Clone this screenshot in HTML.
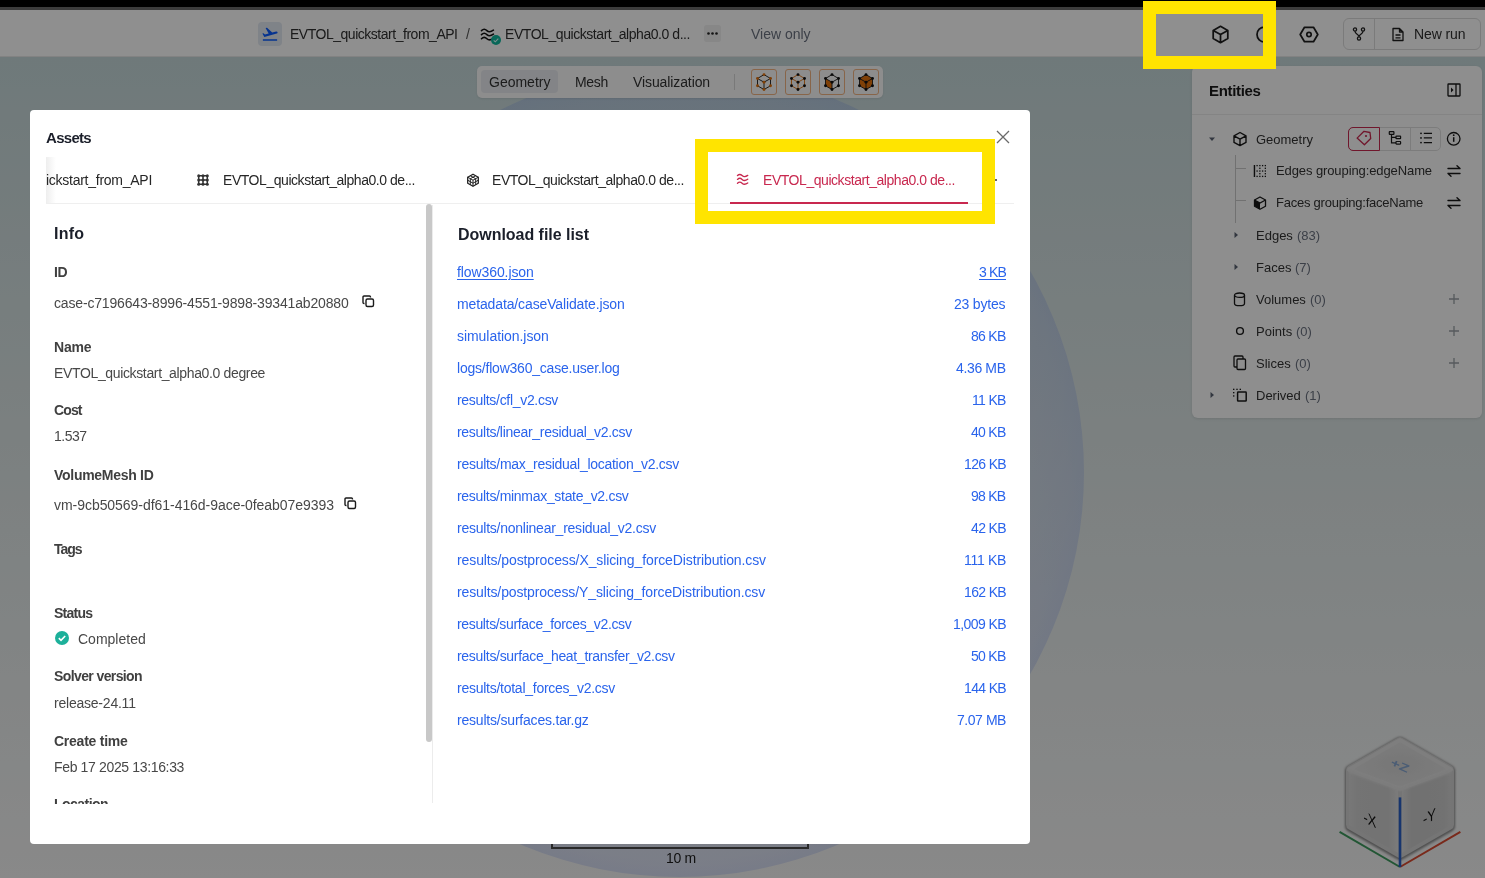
<!DOCTYPE html><html><head><meta charset="utf-8"><style>
html,body{margin:0;padding:0;}
body{width:1485px;height:878px;overflow:hidden;position:relative;background:#fff;font-family:"Liberation Sans",sans-serif;}
.a{position:absolute;box-sizing:border-box;}
.t{position:absolute;line-height:1;white-space:nowrap;-webkit-font-smoothing:antialiased;will-change:transform;}
</style></head><body>
<div class="a" style="left:0px;top:57px;width:1485px;height:821px;background:linear-gradient(180deg,#c6d8da 0%,#d9e3e3 40%,#f4f4f4 100%);"></div>
<div class="a" style="left:275.0px;top:67.5px;width:809px;height:809px;border-radius:50%;background:radial-gradient(circle closest-side,rgba(100,130,230,0.05) 0%,rgba(100,130,230,0.10) 80%,rgba(100,130,230,0.17) 96%,rgba(110,140,235,0.22) 100%);"></div>
<div class="a" style="left:0px;top:10px;width:1485px;height:47px;background:#fff;border-bottom:1px solid #e8e8e8;"></div>
<div class="a" style="left:258px;top:22px;width:24px;height:24px;background:#e3e9f3;border-radius:4px;"></div>
<svg class="a" style="left:261px;top:25px;" width="18" height="18" viewBox="0 0 24 24" fill="none"><path d="M2.5 19h19v2h-19v-2zm19.57-9.36c-.21-.8-1.04-1.28-1.84-1.06L14.92 10l-6.9-6.43-1.93.51 4.14 7.17-4.97 1.33-1.97-1.54-1.45.39 2.59 4.49L21 11.49c.81-.23 1.28-1.05 1.07-1.85z" fill="#0a5cff"/></svg>
<div class="t" style="left:290.0px;top:27.1px;font-size:14px;font-weight:400;color:#303030;letter-spacing:-0.479px;">EVTOL_quickstart_from_API</div>
<div class="t" style="left:466.0px;top:27.1px;font-size:14px;font-weight:400;color:#555;">/</div>
<svg class="a" style="left:480px;top:27px;" width="16" height="14" viewBox="0 0 16 14" fill="none"><path d="M1.5 3.6c1.8-1.8 3.6-1.8 5.4 0s3.6 1.8 6.5-.4M1.5 7.6c1.8-1.8 3.6-1.8 5.4 0s3.6 1.8 6.5-.4M1.5 11.7c1.8-1.8 3.6-1.8 5.4 0s3.6 1.8 6.5-.4" stroke="#111" stroke-width="1.6" stroke-linecap="round"/></svg>
<svg class="a" style="left:490px;top:34px;" width="12" height="12" viewBox="0 0 12 12" fill="none"><circle cx="6" cy="6" r="5" fill="#10b89e"/><path d="M3.7 6.3l1.6 1.5 3-3.2" stroke="#dff" stroke-width="1.1"/></svg>
<div class="t" style="left:505.0px;top:27.1px;font-size:14px;font-weight:400;color:#303030;letter-spacing:-0.439px;">EVTOL_quickstart_alpha0.0 d...</div>
<div class="a" style="left:704px;top:25px;width:17px;height:17px;background:#f0f0f0;border-radius:3px;"></div>
<svg class="a" style="left:704px;top:25px;" width="17" height="17" viewBox="0 0 17 17" fill="none"><circle cx="4.5" cy="8.5" r="1.3" fill="#222"/><circle cx="8.5" cy="8.5" r="1.3" fill="#222"/><circle cx="12.5" cy="8.5" r="1.3" fill="#222"/></svg>
<div class="t" style="left:751.0px;top:27.1px;font-size:14px;font-weight:400;color:#6b7280;letter-spacing:-0.018px;">View only</div>
<svg class="a" style="left:1211px;top:25px;" width="19" height="19" viewBox="0 0 19 19" fill="none"><path d="M9.5 1.3l7.3 4.1v8.2l-7.3 4.1-7.3-4.1V5.4z M2.2 5.4l7.3 4.1 7.3-4.1 M9.5 9.5v8.2" stroke="#1f1f1f" stroke-width="1.75" stroke-linejoin="round"/></svg>
<svg class="a" style="left:1255px;top:25px;" width="19" height="19" viewBox="0 0 19 19" fill="none"><circle cx="9.5" cy="9.5" r="7.5" stroke="#1f1f1f" stroke-width="1.75"/></svg>
<svg class="a" style="left:1299px;top:25px;" width="20" height="19" viewBox="0 0 20 19" fill="none"><path d="M5.5 2.3h9l4.3 7.2-4.3 7.2h-9L1.2 9.5z" stroke="#1f1f1f" stroke-width="1.75" stroke-linejoin="round"/><circle cx="10" cy="9.5" r="2.2" stroke="#1f1f1f" stroke-width="1.7"/></svg>
<div class="a" style="left:1343px;top:18px;width:138px;height:32px;border:1px solid #dcdcdc;border-radius:6px;"></div>
<div class="a" style="left:1374px;top:18px;width:1px;height:32px;background:#dcdcdc;"></div>
<svg class="a" style="left:1352px;top:27px;" width="14" height="14" viewBox="0 0 14 14" fill="none"><circle cx="3" cy="2.5" r="1.6" stroke="#1f1f1f" stroke-width="1.3"/><circle cx="11" cy="2.5" r="1.6" stroke="#1f1f1f" stroke-width="1.3"/><circle cx="7" cy="11.5" r="1.6" stroke="#1f1f1f" stroke-width="1.3"/><path d="M3 4.2c0 3 4 3 4 5.5M11 4.2c0 3-4 3-4 5.5" stroke="#1f1f1f" stroke-width="1.3"/></svg>
<svg class="a" style="left:1391px;top:27px;" width="14" height="15" viewBox="0 0 14 15" fill="none"><path d="M2 1.5h6.5l3.5 3.5v8.5H2z M8.5 1.5V5H12 M4.5 8h5M4.5 10.8h5" stroke="#1f1f1f" stroke-width="1.3" stroke-linejoin="round"/></svg>
<div class="t" style="left:1414.0px;top:27.1px;font-size:14px;font-weight:400;color:#303030;letter-spacing:-0.104px;">New run</div>
<div class="a" style="left:477px;top:66px;width:406px;height:32px;background:#fbfbfb;border-radius:5px;box-shadow:0 1px 2px rgba(0,0,0,0.08);"></div>
<div class="a" style="left:481px;top:70px;width:77px;height:23px;background:#e9ecf1;border-radius:4px;"></div>
<div class="t" style="left:489.0px;top:75.1px;font-size:14px;font-weight:400;color:#333;letter-spacing:-0.007px;">Geometry</div>
<div class="t" style="left:575.0px;top:75.1px;font-size:14px;font-weight:400;color:#333;letter-spacing:-0.308px;">Mesh</div>
<div class="t" style="left:632.6px;top:75.1px;font-size:14px;font-weight:400;color:#333;letter-spacing:-0.103px;">Visualization</div>
<div class="a" style="left:734px;top:74px;width:1px;height:16px;background:#d8d8d8;"></div>
<div class="a" style="left:751px;top:69px;width:26px;height:26px;border:1px solid #f2b483;border-radius:3px;"></div>
<svg class="a" style="left:751px;top:69px;" width="26" height="26" viewBox="0 0 26 26" fill="none"><path d="M13,5.6 L19.5,9.5 L19.5,16.8 L13,20.5 L6.5,16.8 L6.5,9.5z M6.5,9.5 L13,13.2 L19.5,9.5 M13,13.2 L13,20.5" stroke="#1a1a1a" stroke-width="0.9" stroke-linejoin="round"/><circle cx="13" cy="5.6" r="1.45" fill="#e2720e"/><circle cx="6.5" cy="9.5" r="1.45" fill="#e2720e"/><circle cx="19.5" cy="9.5" r="1.45" fill="#e2720e"/><circle cx="13" cy="13.2" r="1.45" fill="#e2720e"/><circle cx="6.5" cy="16.8" r="1.45" fill="#e2720e"/><circle cx="19.5" cy="16.8" r="1.45" fill="#e2720e"/><circle cx="13" cy="20.5" r="1.45" fill="#e2720e"/></svg>
<div class="a" style="left:785px;top:69px;width:26px;height:26px;border:1px solid #f2b483;border-radius:3px;"></div>
<svg class="a" style="left:785px;top:69px;" width="26" height="26" viewBox="0 0 26 26" fill="none"><path d="M13,5.6 L19.5,9.5 L19.5,16.8 L13,20.5 L6.5,16.8 L6.5,9.5z M6.5,9.5 L13,13.2 L19.5,9.5 M13,13.2 L13,20.5" stroke="#e2720e" stroke-width="0.9" stroke-linejoin="round"/><circle cx="13" cy="5.6" r="1.45" fill="#111"/><circle cx="6.5" cy="9.5" r="1.45" fill="#111"/><circle cx="19.5" cy="9.5" r="1.45" fill="#111"/><circle cx="13" cy="13.2" r="1.45" fill="#111"/><circle cx="6.5" cy="16.8" r="1.45" fill="#111"/><circle cx="19.5" cy="16.8" r="1.45" fill="#111"/><circle cx="13" cy="20.5" r="1.45" fill="#111"/></svg>
<div class="a" style="left:819px;top:69px;width:26px;height:26px;border:1px solid #f2b483;border-radius:3px;"></div>
<svg class="a" style="left:819px;top:69px;" width="26" height="26" viewBox="0 0 26 26" fill="none"><path d="M6.5,9.5 L13,13.2 L13,20.5 L6.5,16.8z" fill="#e2720e"/><path d="M13,5.6 L19.5,9.5 L19.5,16.8 L13,20.5 L6.5,16.8 L6.5,9.5z M6.5,9.5 L13,13.2 L19.5,9.5 M13,13.2 L13,20.5" stroke="#1a1a1a" stroke-width="0.9" stroke-linejoin="round"/><circle cx="13" cy="5.6" r="1.45" fill="#111"/><circle cx="6.5" cy="9.5" r="1.45" fill="#111"/><circle cx="19.5" cy="9.5" r="1.45" fill="#111"/><circle cx="13" cy="13.2" r="1.45" fill="#111"/><circle cx="6.5" cy="16.8" r="1.45" fill="#111"/><circle cx="19.5" cy="16.8" r="1.45" fill="#111"/><circle cx="13" cy="20.5" r="1.45" fill="#111"/></svg>
<div class="a" style="left:853px;top:69px;width:26px;height:26px;border:1px solid #f2b483;border-radius:3px;"></div>
<svg class="a" style="left:853px;top:69px;" width="26" height="26" viewBox="0 0 26 26" fill="none"><path d="M13,5.6 L19.5,9.5 L19.5,16.8 L13,20.5 L6.5,16.8 L6.5,9.5z" fill="#e2720e"/><path d="M13,5.6 L19.5,9.5 L19.5,16.8 L13,20.5 L6.5,16.8 L6.5,9.5z M6.5,9.5 L13,13.2 L19.5,9.5 M13,13.2 L13,20.5" stroke="#1a1a1a" stroke-width="0.9" stroke-linejoin="round"/><circle cx="13" cy="5.6" r="1.45" fill="#111"/><circle cx="6.5" cy="9.5" r="1.45" fill="#111"/><circle cx="19.5" cy="9.5" r="1.45" fill="#111"/><circle cx="13" cy="13.2" r="1.45" fill="#111"/><circle cx="6.5" cy="16.8" r="1.45" fill="#111"/><circle cx="19.5" cy="16.8" r="1.45" fill="#111"/><circle cx="13" cy="20.5" r="1.45" fill="#111"/></svg>
<div class="a" style="left:1192px;top:66px;width:290px;height:352px;background:#fdfdfd;border-radius:6px;box-shadow:0 1px 3px rgba(0,0,0,0.10);"></div>
<div class="t" style="left:1209.0px;top:83.1px;font-size:15px;font-weight:700;color:#1a1a1a;letter-spacing:-0.322px;">Entities</div>
<svg class="a" style="left:1447px;top:83px;" width="14" height="14" viewBox="0 0 14 14" fill="none"><rect x="1" y="1" width="12" height="12" rx="0.5" stroke="#1a1a1a" stroke-width="1.3"/><path d="M9 1v12" stroke="#1a1a1a" stroke-width="1.3"/><path d="M4 4.5l2.5 2.5L4 9.5z" fill="#1a1a1a"/></svg>
<div class="a" style="left:1192px;top:114px;width:290px;height:1px;background:#ebebeb;"></div>
<svg class="a" style="left:1208px;top:136px;" width="8" height="6" viewBox="0 0 8 6" fill="none"><path d="M1 1.5h6L4 5z" fill="#5a6272"/></svg>
<svg class="a" style="left:1232px;top:131px;" width="16" height="16" viewBox="0 0 16 16" fill="none"><path d="M8 1.5l6 3.3v6.6L8 14.6 2 11.4V4.8z M2 4.8l6 3.4 6-3.4 M8 8.2v6.4" stroke="#1a1a1a" stroke-width="1.4" stroke-linejoin="round"/></svg>
<div class="t" style="left:1256.0px;top:133.4px;font-size:13px;font-weight:400;color:#333;letter-spacing:-0.008px;">Geometry</div>
<div class="a" style="left:1348px;top:127px;width:93px;height:24px;border:1px solid #dedede;border-radius:5px;"></div>
<div class="a" style="left:1379px;top:127px;width:1px;height:24px;background:#dedede;"></div>
<div class="a" style="left:1410px;top:127px;width:1px;height:24px;background:#dedede;"></div>
<div class="a" style="left:1348px;top:127px;width:32px;height:24px;border:1px solid #c8284f;border-radius:5px 0 0 5px;"></div>
<svg class="a" style="left:1345px;top:124px;" width="120" height="30" viewBox="0 0 120 30" fill="none"><path d="M12.1 14.1L19 7.3l6 1.2.7 6-6.3 6.3z" stroke="#c8284f" stroke-width="1.3" stroke-linejoin="round"/><circle cx="21" cy="12" r="1.1" fill="#c8284f"/><rect x="44.3" y="7.6" width="4.6" height="2.8" rx="0.5" stroke="#1a1a1a" stroke-width="1.2"/><rect x="51" y="12.1" width="4.6" height="2.6" rx="0.5" stroke="#1a1a1a" stroke-width="1.2"/><rect x="51" y="17.5" width="4.6" height="2.6" rx="0.5" stroke="#1a1a1a" stroke-width="1.2"/><path d="M46.5 10.4v8.4H51M46.5 13.4H51" stroke="#1a1a1a" stroke-width="1.2"/><circle cx="76" cy="9.3" r="0.9" fill="#1a1a1a"/><circle cx="76" cy="13.9" r="0.9" fill="#1a1a1a"/><circle cx="76" cy="18.6" r="0.9" fill="#1a1a1a"/><path d="M78.8 9.3h8.2M78.8 13.9h8.2M78.8 18.6h8.2" stroke="#1a1a1a" stroke-width="1.2"/><circle cx="108.7" cy="14.8" r="6.3" stroke="#1a1a1a" stroke-width="1.3"/><path d="M108.7 13.2v4.6" stroke="#1a1a1a" stroke-width="1.5"/><circle cx="108.7" cy="11.2" r="0.9" fill="#1a1a1a"/></svg>
<div class="a" style="left:1235px;top:155px;width:1px;height:68px;background:#c9c9c9;"></div>
<div class="a" style="left:1236px;top:168px;width:10px;height:1px;background:#c9c9c9;"></div>
<div class="a" style="left:1236px;top:200px;width:10px;height:1px;background:#c9c9c9;"></div>
<svg class="a" style="left:1253px;top:164px;" width="14" height="14" viewBox="0 0 14 14" fill="none"><rect x="0.75" y="1" width="1.4" height="12" fill="#1a1a1a"/><rect x="3.45" y="0.95" width="1.3" height="1.3" fill="#1a1a1a"/><rect x="6.20" y="0.95" width="1.3" height="1.3" fill="#1a1a1a"/><rect x="8.95" y="0.95" width="1.3" height="1.3" fill="#1a1a1a"/><rect x="11.70" y="0.95" width="1.3" height="1.3" fill="#1a1a1a"/><rect x="6.20" y="3.65" width="1.3" height="1.3" fill="#1a1a1a"/><rect x="11.70" y="3.65" width="1.3" height="1.3" fill="#1a1a1a"/><rect x="3.45" y="6.40" width="1.3" height="1.3" fill="#1a1a1a"/><rect x="6.20" y="6.40" width="1.3" height="1.3" fill="#1a1a1a"/><rect x="8.95" y="6.40" width="1.3" height="1.3" fill="#1a1a1a"/><rect x="11.70" y="6.40" width="1.3" height="1.3" fill="#1a1a1a"/><rect x="6.20" y="9.05" width="1.3" height="1.3" fill="#1a1a1a"/><rect x="11.70" y="9.05" width="1.3" height="1.3" fill="#1a1a1a"/><rect x="3.45" y="11.75" width="1.3" height="1.3" fill="#1a1a1a"/><rect x="6.20" y="11.75" width="1.3" height="1.3" fill="#1a1a1a"/><rect x="8.95" y="11.75" width="1.3" height="1.3" fill="#1a1a1a"/><rect x="11.70" y="11.75" width="1.3" height="1.3" fill="#1a1a1a"/></svg>
<div class="t" style="left:1276.4px;top:164.2px;font-size:13px;font-weight:400;color:#333;letter-spacing:-0.099px;">Edges grouping:edgeName</div>
<svg class="a" style="left:1447px;top:164px;" width="14" height="14" viewBox="0 0 14 14" fill="none"><path d="M1 4.5h12M10 1.8l3 2.7M1 9.5h12M4 12.2L1 9.5" stroke="#1a1a1a" stroke-width="1.4" stroke-linecap="round"/></svg>
<svg class="a" style="left:1253px;top:196px;" width="14" height="14" viewBox="0 0 14 14" fill="none"><path d="M7 1l5.5 3v6.2L7 13.2 1.5 10.2V4z" stroke="#1a1a1a" stroke-width="1.3" stroke-linejoin="round"/><path d="M1.5 4L7 7v6.2L1.5 10.2z" fill="#1a1a1a"/><path d="M1.5 4L7 7l5.5-3" stroke="#1a1a1a" stroke-width="1.3"/></svg>
<div class="t" style="left:1276.4px;top:196.4px;font-size:13px;font-weight:400;color:#333;letter-spacing:-0.237px;">Faces grouping:faceName</div>
<svg class="a" style="left:1447px;top:196px;" width="14" height="14" viewBox="0 0 14 14" fill="none"><path d="M1 4.5h12M10 1.8l3 2.7M1 9.5h12M4 12.2L1 9.5" stroke="#1a1a1a" stroke-width="1.4" stroke-linecap="round"/></svg>
<svg class="a" style="left:1233px;top:231px;" width="6" height="8" viewBox="0 0 6 8" fill="none"><path d="M1.5 1v6L5 4z" fill="#5a6272"/></svg>
<div class="t" style="left:1256.4px;top:229.3px;font-size:13px;font-weight:400;color:#333;">Edges </div>
<div class="t" style="left:1296.9px;top:229.3px;font-size:13px;font-weight:400;color:#6b7280;">(83)</div>
<svg class="a" style="left:1233px;top:263px;" width="6" height="8" viewBox="0 0 6 8" fill="none"><path d="M1.5 1v6L5 4z" fill="#5a6272"/></svg>
<div class="t" style="left:1256.4px;top:260.6px;font-size:13px;font-weight:400;color:#333;">Faces </div>
<div class="t" style="left:1295.4px;top:260.6px;font-size:13px;font-weight:400;color:#6b7280;">(7)</div>
<svg class="a" style="left:1233px;top:292px;" width="13" height="15" viewBox="0 0 13 15" fill="none"><ellipse cx="6.5" cy="3.2" rx="5" ry="2.2" stroke="#1a1a1a" stroke-width="1.3"/><path d="M1.5 3.2v8.3c0 1.3 2.2 2.2 5 2.2s5-.9 5-2.2V3.2" stroke="#1a1a1a" stroke-width="1.3"/></svg>
<div class="t" style="left:1256.4px;top:292.8px;font-size:13px;font-weight:400;color:#333;">Volumes </div>
<div class="t" style="left:1309.9px;top:292.8px;font-size:13px;font-weight:400;color:#6b7280;">(0)</div>
<svg class="a" style="left:1235px;top:326px;" width="10" height="10" viewBox="0 0 10 10" fill="none"><circle cx="5" cy="5" r="3.4" stroke="#1a1a1a" stroke-width="1.4"/></svg>
<div class="t" style="left:1256.4px;top:324.8px;font-size:13px;font-weight:400;color:#333;">Points </div>
<div class="t" style="left:1296.1px;top:324.8px;font-size:13px;font-weight:400;color:#6b7280;">(0)</div>
<svg class="a" style="left:1233px;top:355px;" width="14" height="16" viewBox="0 0 14 16" fill="none"><rect x="1" y="1" width="9" height="11" rx="1" stroke="#1a1a1a" stroke-width="1.3"/><rect x="4" y="4" width="8.5" height="10.5" rx="1" fill="#fdfdfd" stroke="#1a1a1a" stroke-width="1.3"/></svg>
<div class="t" style="left:1256.4px;top:356.5px;font-size:13px;font-weight:400;color:#333;">Slices </div>
<div class="t" style="left:1294.7px;top:356.5px;font-size:13px;font-weight:400;color:#6b7280;">(0)</div>
<svg class="a" style="left:1209px;top:391px;" width="6" height="8" viewBox="0 0 6 8" fill="none"><path d="M1.5 1v6L5 4z" fill="#5a6272"/></svg>
<svg class="a" style="left:1232px;top:387px;" width="16" height="16" viewBox="0 0 16 16" fill="none"><g fill="#1a1a1a"><rect x="1" y="1.7" width="1.4" height="1.3"/><rect x="4.3" y="1.7" width="1.4" height="1.3"/><rect x="7.6" y="1.7" width="1.4" height="1.3"/><rect x="1" y="5" width="1.4" height="1.3"/><rect x="1" y="8.3" width="1.4" height="1.3"/></g><rect x="5.6" y="5.1" width="8.6" height="8.9" rx="0.6" stroke="#1a1a1a" stroke-width="1.5"/></svg>
<div class="t" style="left:1256.4px;top:388.5px;font-size:13px;font-weight:400;color:#333;">Derived </div>
<div class="t" style="left:1304.8px;top:388.5px;font-size:13px;font-weight:400;color:#6b7280;">(1)</div>
<svg class="a" style="left:1448px;top:293px;" width="12" height="12" viewBox="0 0 12 12" fill="none"><path d="M6 1v10M1 6h10" stroke="#9aa0a6" stroke-width="1.3"/></svg>
<svg class="a" style="left:1448px;top:325px;" width="12" height="12" viewBox="0 0 12 12" fill="none"><path d="M6 1v10M1 6h10" stroke="#9aa0a6" stroke-width="1.3"/></svg>
<svg class="a" style="left:1448px;top:357px;" width="12" height="12" viewBox="0 0 12 12" fill="none"><path d="M6 1v10M1 6h10" stroke="#9aa0a6" stroke-width="1.3"/></svg>
<svg class="a" style="left:1330px;top:730px;will-change:transform;" width="140" height="145" viewBox="0 0 140 145" fill="none">
<defs>
<linearGradient id="lf" x1="0" y1="0" x2="1" y2="0"><stop offset="0" stop-color="#d6d6d6"/><stop offset="0.15" stop-color="#cfcfcf"/><stop offset="0.8" stop-color="#cdcdcd"/><stop offset="1" stop-color="#dcdcdc"/></linearGradient>
<linearGradient id="rf" x1="0" y1="0" x2="1" y2="0"><stop offset="0" stop-color="#dadada"/><stop offset="0.2" stop-color="#c9c9c9"/><stop offset="0.85" stop-color="#cbcbcb"/><stop offset="1" stop-color="#d2d2d2"/></linearGradient>
<radialGradient id="tf" cx="0.5" cy="0.5" r="0.6"><stop offset="0" stop-color="#d4d4d4"/><stop offset="0.7" stop-color="#dcdcdc"/><stop offset="1" stop-color="#e6e6e6"/></radialGradient>
<filter id="bl" x="-20%" y="-20%" width="140%" height="140%"><feGaussianBlur stdDeviation="1.2"/></filter>
</defs>
<path d="M70 12 L119 40 L119 95 L70 123 L21 95 L21 40 Z" fill="#8a8a8a" stroke="#8a8a8a" stroke-width="12" stroke-linejoin="round" filter="url(#bl)" transform="translate(0 1)"/>
<path d="M70 12 L119 40 L119 95 L70 123 L21 95 L21 40 Z" fill="#d0d0d0" stroke="#d0d0d0" stroke-width="10" stroke-linejoin="round"/>
<path d="M70 10 L121 39.6 L70 58.6 L19 39.6 Z" fill="url(#tf)" stroke="#e0e0e0" stroke-width="4" stroke-linejoin="round"/>
<path d="M19 42 L68 60 L68 123 L19 95 Z" fill="url(#lf)"/>
<path d="M121 42 L72 60 L72 123 L121 95 Z" fill="url(#rf)"/>
<path d="M19 41 L70 59.5 L121 41" stroke="#dedede" stroke-width="3" stroke-linejoin="round" filter="url(#bl)"/>
<path d="M70 60 L70 124" stroke="#dadada" stroke-width="5" filter="url(#bl)"/>
<g transform="translate(70 36) rotate(24) scale(1 0.7)"><text x="0" y="5" font-family="Liberation Sans" font-size="16" font-weight="700" fill="#86a6d0" text-anchor="middle">+Z</text></g>
<g transform="translate(40 89) skewY(26) scale(0.8 1)"><text x="0" y="6" font-family="Liberation Sans" font-size="16" fill="#111" text-anchor="middle">-X</text></g>
<g transform="translate(99.5 86) skewY(-26) scale(0.8 1)"><text x="0" y="6" font-family="Liberation Sans" font-size="16" fill="#111" text-anchor="middle">-Y</text></g>
<path d="M70 137 L9.6 101.9" stroke="#3e9a5e" stroke-width="2"/>
<path d="M70 137 L130.4 101.9" stroke="#d84a30" stroke-width="2"/>
<path d="M70 137 L70 67.4" stroke="#2a5fc4" stroke-width="2.6"/>
</svg>
<div class="a" style="left:551px;top:830px;width:258px;height:19px;border:2px solid #4a4a4a;border-top:none;"></div>
<div class="t" style="left:665.5px;top:851.0px;font-size:14px;font-weight:400;color:#1c1c1c;letter-spacing:-0.280px;">10 m</div>
<div class="a" style="left:0px;top:0px;width:1485px;height:878px;background:rgba(0,0,0,0.44);"></div>
<div class="a" style="left:0px;top:0px;width:1485px;height:7px;background:#000;"></div>
<div class="a" style="left:0px;top:7px;width:1485px;height:3px;background:#3c3c3c;"></div>
<div class="a" style="left:30px;top:110px;width:1000px;height:734px;background:#fff;border-radius:4px;"></div>
<div class="t" style="left:46.0px;top:130.3px;font-size:15px;font-weight:700;color:#1b1f2a;letter-spacing:-0.699px;">Assets</div>
<svg class="a" style="left:996px;top:130px;" width="14" height="14" viewBox="0 0 14 14" fill="none"><path d="M1 1l12 12M13 1L1 13" stroke="#6a6a6a" stroke-width="1.3"/></svg>
<div class="a" style="left:46px;top:203px;width:968px;height:1px;background:#efefef;"></div>
<div class="a" style="left:46px;top:157px;width:10px;height:46px;background:linear-gradient(90deg,#eeeeee,rgba(255,255,255,0));"></div>
<div class="t" style="left:46.0px;top:173.3px;font-size:14px;font-weight:400;color:#262626;letter-spacing:-0.263px;">ickstart_from_API</div>
<svg class="a" style="left:196px;top:173px;" width="14" height="14" viewBox="0 0 14 14" fill="none"><path d="M2.7 2.7h8.6M2.7 7h8.6M2.7 11.3h8.6M2.7 2.7v8.6M7 2.7v8.6M11.3 2.7v8.6" stroke="#333" stroke-width="1.5"/><circle cx="2.7" cy="2.7" r="1.5" fill="#333"/><circle cx="2.7" cy="7" r="1.5" fill="#333"/><circle cx="2.7" cy="11.3" r="1.5" fill="#333"/><circle cx="7" cy="2.7" r="1.5" fill="#333"/><circle cx="7" cy="7" r="1.5" fill="#333"/><circle cx="7" cy="11.3" r="1.5" fill="#333"/><circle cx="11.3" cy="2.7" r="1.5" fill="#333"/><circle cx="11.3" cy="7" r="1.5" fill="#333"/><circle cx="11.3" cy="11.3" r="1.5" fill="#333"/></svg>
<div class="t" style="left:222.6px;top:173.3px;font-size:14px;font-weight:400;color:#262626;letter-spacing:-0.451px;">EVTOL_quickstart_alpha0.0 de...</div>
<svg class="a" style="left:466px;top:173px;" width="14" height="14" viewBox="0 0 14 14" fill="none"><path d="M7 1.2l5.3 3v6.1L7 13.3 1.7 10.3V4.2z" stroke="#222" stroke-width="1.3" stroke-linejoin="round"/><path d="M1.7 4.2L7 7.2l5.3-3M7 7.2v6M4.3 2.7L9.7 5.7M9.7 2.7L4.3 5.7M1.7 7.2L7 10.2l5.3-3M4.3 5.7v6.1M9.7 5.7v6.1" stroke="#222" stroke-width="1"/></svg>
<div class="t" style="left:492.2px;top:173.3px;font-size:14px;font-weight:400;color:#262626;letter-spacing:-0.451px;">EVTOL_quickstart_alpha0.0 de...</div>
<svg class="a" style="left:736px;top:172px;" width="14" height="14" viewBox="0 0 14 14" fill="none"><path d="M1.5 3.6c1.6-1.5 3-1.5 4.6 0s3.2 1.6 5.6-.2M1.5 7.4c1.6-1.5 3-1.5 4.6 0s3.2 1.6 5.6-.2M1.5 11.2c1.6-1.5 3-1.5 4.6 0s3.2 1.6 5.6-.2" stroke="#c8284f" stroke-width="1.35" stroke-linecap="round"/></svg>
<div class="t" style="left:762.5px;top:173.3px;font-size:14px;font-weight:400;color:#c8284f;letter-spacing:-0.451px;">EVTOL_quickstart_alpha0.0 de...</div>
<div class="a" style="left:730px;top:201.5px;width:238px;height:2.5px;background:#c8284f;"></div>
<div class="a" style="left:995px;top:179px;width:2px;height:2px;background:#333;border-radius:1px;"></div>
<div class="a" style="left:432px;top:205px;width:1px;height:598px;background:#ececec;"></div>
<div class="a" style="left:426px;top:204px;width:6px;height:538px;background:#c8c8c8;border-radius:3px;"></div>
<div class="t" style="left:54.0px;top:226.4px;font-size:16px;font-weight:700;color:#1b1f2a;letter-spacing:0.271px;">Info</div>
<div class="t" style="left:54.0px;top:265.1px;font-size:14px;font-weight:700;color:#404040;letter-spacing:-0.500px;">ID</div>
<div class="t" style="left:54.0px;top:296.4px;font-size:14px;font-weight:400;color:#484848;letter-spacing:-0.164px;">case-c7196643-8996-4551-9898-39341ab20880</div>
<svg class="a" style="left:362px;top:295px;" width="13" height="13" viewBox="0 0 13 13" fill="none"><rect x="4" y="4" width="7.5" height="7.5" rx="1.5" stroke="#1a1a1a" stroke-width="1.4"/><path d="M2.5 8.5H2A1 1 0 0 1 1 7.5V2a1 1 0 0 1 1-1h5.5a1 1 0 0 1 1 1v.5" stroke="#1a1a1a" stroke-width="1.4"/></svg>
<div class="t" style="left:54.0px;top:339.5px;font-size:14px;font-weight:700;color:#404040;letter-spacing:-0.208px;">Name</div>
<div class="t" style="left:54.0px;top:365.6px;font-size:14px;font-weight:400;color:#484848;letter-spacing:-0.354px;">EVTOL_quickstart_alpha0.0 degree</div>
<div class="t" style="left:54.0px;top:403.1px;font-size:14px;font-weight:700;color:#404040;letter-spacing:-0.877px;">Cost</div>
<div class="t" style="left:54.0px;top:429.4px;font-size:14px;font-weight:400;color:#484848;letter-spacing:-0.506px;">1.537</div>
<div class="t" style="left:54.0px;top:467.6px;font-size:14px;font-weight:700;color:#404040;letter-spacing:-0.284px;">VolumeMesh ID</div>
<div class="t" style="left:54.0px;top:498.1px;font-size:14px;font-weight:400;color:#484848;letter-spacing:-0.045px;">vm-9cb50569-df61-416d-9ace-0feab07e9393</div>
<svg class="a" style="left:344px;top:497px;" width="13" height="13" viewBox="0 0 13 13" fill="none"><rect x="4" y="4" width="7.5" height="7.5" rx="1.5" stroke="#1a1a1a" stroke-width="1.4"/><path d="M2.5 8.5H2A1 1 0 0 1 1 7.5V2a1 1 0 0 1 1-1h5.5a1 1 0 0 1 1 1v.5" stroke="#1a1a1a" stroke-width="1.4"/></svg>
<div class="t" style="left:54.0px;top:541.9px;font-size:14px;font-weight:700;color:#404040;letter-spacing:-1.008px;">Tags</div>
<div class="t" style="left:54.0px;top:605.6px;font-size:14px;font-weight:700;color:#404040;letter-spacing:-0.764px;">Status</div>
<svg class="a" style="left:55px;top:631px;" width="14" height="14" viewBox="0 0 14 14" fill="none"><circle cx="7" cy="7" r="7" fill="#1cb09a"/><path d="M3.8 7.2l2.2 2.1 4.2-4.3" stroke="#fff" stroke-width="1.6" fill="none"/></svg>
<div class="t" style="left:77.9px;top:632.1px;font-size:14px;font-weight:400;color:#484848;letter-spacing:0.000px;">Completed</div>
<div class="t" style="left:54.0px;top:669.4px;font-size:14px;font-weight:700;color:#404040;letter-spacing:-0.606px;">Solver version</div>
<div class="t" style="left:54.0px;top:695.5px;font-size:14px;font-weight:400;color:#484848;letter-spacing:-0.221px;">release-24.11</div>
<div class="t" style="left:54.0px;top:733.5px;font-size:14px;font-weight:700;color:#404040;letter-spacing:-0.250px;">Create time</div>
<div class="t" style="left:54.0px;top:759.9px;font-size:14px;font-weight:400;color:#484848;letter-spacing:-0.350px;">Feb 17 2025 13:16:33</div>
<div class="a" style="left:46px;top:790px;width:380px;height:14px;overflow:hidden;"><div class="t" style="left:8.0px;top:7.1px;font-size:14px;font-weight:700;color:#404040;letter-spacing:-0.541px;">Location</div>
</div>
<div class="t" style="left:457.8px;top:226.6px;font-size:16px;font-weight:700;color:#1b1f2a;letter-spacing:-0.031px;">Download file list</div>
<div class="t" style="left:456.8px;top:265.1px;font-size:14px;font-weight:400;color:#2a64ec;letter-spacing:-0.094px;text-decoration:underline;text-underline-offset:2px;">flow360.json</div>
<div class="t" style="left:978.6px;top:265.1px;font-size:14px;font-weight:400;color:#2a64ec;letter-spacing:-0.838px;text-decoration:underline;text-underline-offset:2px;">3 KB</div>
<div class="t" style="left:456.8px;top:297.1px;font-size:14px;font-weight:400;color:#2a64ec;letter-spacing:-0.129px;">metadata/caseValidate.json</div>
<div class="t" style="left:954.3px;top:297.1px;font-size:14px;font-weight:400;color:#2a64ec;letter-spacing:-0.203px;">23 bytes</div>
<div class="t" style="left:456.8px;top:329.1px;font-size:14px;font-weight:400;color:#2a64ec;letter-spacing:-0.053px;">simulation.json</div>
<div class="t" style="left:971.1px;top:329.1px;font-size:14px;font-weight:400;color:#2a64ec;letter-spacing:-0.727px;">86 KB</div>
<div class="t" style="left:456.8px;top:361.1px;font-size:14px;font-weight:400;color:#2a64ec;letter-spacing:-0.215px;">logs/flow360_case.user.log</div>
<div class="t" style="left:956.0px;top:361.1px;font-size:14px;font-weight:400;color:#2a64ec;letter-spacing:-0.362px;">4.36 MB</div>
<div class="t" style="left:456.8px;top:393.1px;font-size:14px;font-weight:400;color:#2a64ec;letter-spacing:-0.310px;">results/cfl_v2.csv</div>
<div class="t" style="left:971.8px;top:393.1px;font-size:14px;font-weight:400;color:#2a64ec;letter-spacing:-0.660px;">11 KB</div>
<div class="t" style="left:456.8px;top:425.1px;font-size:14px;font-weight:400;color:#2a64ec;letter-spacing:-0.288px;">results/linear_residual_v2.csv</div>
<div class="t" style="left:971.1px;top:425.1px;font-size:14px;font-weight:400;color:#2a64ec;letter-spacing:-0.727px;">40 KB</div>
<div class="t" style="left:456.8px;top:457.1px;font-size:14px;font-weight:400;color:#2a64ec;letter-spacing:-0.274px;">results/max_residual_location_v2.csv</div>
<div class="t" style="left:963.6px;top:457.1px;font-size:14px;font-weight:400;color:#2a64ec;letter-spacing:-0.654px;">126 KB</div>
<div class="t" style="left:456.8px;top:489.1px;font-size:14px;font-weight:400;color:#2a64ec;letter-spacing:-0.304px;">results/minmax_state_v2.csv</div>
<div class="t" style="left:971.2px;top:489.1px;font-size:14px;font-weight:400;color:#2a64ec;letter-spacing:-0.747px;">98 KB</div>
<div class="t" style="left:456.8px;top:521.1px;font-size:14px;font-weight:400;color:#2a64ec;letter-spacing:-0.242px;">results/nonlinear_residual_v2.csv</div>
<div class="t" style="left:970.6px;top:521.1px;font-size:14px;font-weight:400;color:#2a64ec;letter-spacing:-0.627px;">42 KB</div>
<div class="t" style="left:456.8px;top:553.1px;font-size:14px;font-weight:400;color:#2a64ec;letter-spacing:-0.105px;">results/postprocess/X_slicing_forceDistribution.csv</div>
<div class="t" style="left:963.6px;top:553.1px;font-size:14px;font-weight:400;color:#2a64ec;letter-spacing:-0.307px;">111 KB</div>
<div class="t" style="left:456.8px;top:585.1px;font-size:14px;font-weight:400;color:#2a64ec;letter-spacing:-0.124px;">results/postprocess/Y_slicing_forceDistribution.csv</div>
<div class="t" style="left:963.6px;top:585.1px;font-size:14px;font-weight:400;color:#2a64ec;letter-spacing:-0.654px;">162 KB</div>
<div class="t" style="left:456.8px;top:617.1px;font-size:14px;font-weight:400;color:#2a64ec;letter-spacing:-0.345px;">results/surface_forces_v2.csv</div>
<div class="t" style="left:952.6px;top:617.1px;font-size:14px;font-weight:400;color:#2a64ec;letter-spacing:-0.575px;">1,009 KB</div>
<div class="t" style="left:456.8px;top:649.1px;font-size:14px;font-weight:400;color:#2a64ec;letter-spacing:-0.307px;">results/surface_heat_transfer_v2.csv</div>
<div class="t" style="left:971.0px;top:649.1px;font-size:14px;font-weight:400;color:#2a64ec;letter-spacing:-0.707px;">50 KB</div>
<div class="t" style="left:456.8px;top:681.1px;font-size:14px;font-weight:400;color:#2a64ec;letter-spacing:-0.257px;">results/total_forces_v2.csv</div>
<div class="t" style="left:963.6px;top:681.1px;font-size:14px;font-weight:400;color:#2a64ec;letter-spacing:-0.654px;">144 KB</div>
<div class="t" style="left:456.8px;top:713.1px;font-size:14px;font-weight:400;color:#2a64ec;letter-spacing:-0.202px;">results/surfaces.tar.gz</div>
<div class="t" style="left:956.6px;top:713.1px;font-size:14px;font-weight:400;color:#2a64ec;letter-spacing:-0.448px;">7.07 MB</div>
<div class="a" style="left:1143px;top:1px;width:133px;height:68px;border:13px solid #ffe400;"></div>
<div class="a" style="left:695px;top:139px;width:300px;height:85px;border:13px solid #ffe400;"></div>
</body></html>
